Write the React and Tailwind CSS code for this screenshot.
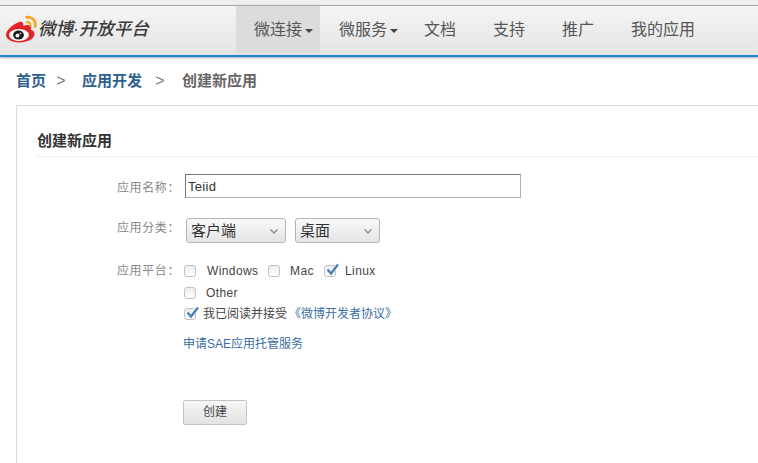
const font = { fontFamily: '"Liberation Sans", "Noto Sans CJK SC", sans-serif' };

function Logo() {
  return (
    <svg width="32" height="28" viewBox="0 0 32 28" className="shrink-0">
      <path d="M13 7C8 9 0 14.500 0 20c0 4.500 6.500 7.500 13.500 7.500C21.500 27.500 28.500 23.500 28.500 19c0-2.600-2-3.800-3.800-4.300 .8-2 .6-3.400-.6-4.200-1.800-1-4.600-.4-6.800 .6 .6-2.400-.6-5.300-4.300-4.100z" fill="#e2232a" />
      <ellipse cx="13" cy="20" rx="10" ry="6" fill="#fff" />
      <ellipse cx="12.500" cy="20" rx="5.400" ry="4.500" fill="#1b1b1b" />
      <circle cx="11.500" cy="20.500" r="2" fill="#fff" />
      <circle cx="14.500" cy="18.500" r="0.800" fill="#fff" />
      <path d="M20.500 2.200c5.200-1 10 3.500 8.600 9.300" fill="none" stroke="#f5a623" strokeWidth="2.800" strokeLinecap="round" />
      <path d="M20.800 7.200c2.300-.5 4.200 1.400 3.700 3.700" fill="none" stroke="#f5a623" strokeWidth="2.200" strokeLinecap="round" />
    </svg>
  );
}

function Caret() {
  return <span className="ml-[3px] mb-[-3px] inline-block border-x-[4px] border-t-[4px] border-x-transparent border-t-[#444]" />;
}

function NavItem({ label, caret, active }) {
  return (
    <a className={`flex items-center h-full pl-[18px] ${active ? 'pr-[7px] mr-px bg-[#dcdcdc]' : caret ? 'pr-[8px]' : 'pr-[19px]'} text-[16px] text-[#555]`}>
      {label}
      {caret && <Caret />}
    </a>
  );
}

function Check({ checked }) {
  return (
    <span className="relative block w-[12px] h-[12px] shrink-0 rounded-[3px] border border-[#c2c2c2] bg-gradient-to-b from-[#ededed] to-white">
      {checked && (
        <svg width="15" height="14" viewBox="0 0 15 14" className="absolute left-0 top-[-4px]">
          <path d="M2.500 7.500L6 11.500 13 2.500" fill="none" stroke="#fff" strokeWidth="3.400" />
          <path d="M2.500 7.500L6 11.500 13 2.500" fill="none" stroke="#4a80b8" strokeWidth="2.400" />
        </svg>
      )}
    </span>
  );
}

function Dropdown({ label, width }) {
  return (
    <div className={`flex items-center justify-between h-[25px] pl-[4px] pr-[7px] pt-[1px] rounded-[3px] border border-[#b5b5b5] bg-gradient-to-b from-[#fafafa] to-[#e4e4e4] text-[15px] text-[#333] ${width}`}>
      {label}
      <svg width="8" height="5" viewBox="0 0 8 5">
        <path d="M.5 .5l3.500 3.500 3.500-3.500" fill="none" stroke="#888" strokeWidth="1.300" />
      </svg>
    </div>
  );
}

function Row({ label, labelPad = '', className, children }) {
  return (
    <div className={`flex ${className}`}>
      <div className={`w-[168px] shrink-0 pr-[5px] text-right text-[12px] leading-[16px] tracking-[0.6px] text-[#888] ${labelPad}`}>{label}</div>
      <div className="flex-1">{children}</div>
    </div>
  );
}

export default function App() {
  return (
    <div style={font} className="w-[758px] h-[463px] overflow-hidden bg-white">
      <div className="h-[5px] bg-[#efefef]" />
      <header className="h-[52px] border-t border-t-[#a9a9a9] border-b-[2px] border-b-[#1f86cf] bg-gradient-to-b from-[#f5f5f5] to-[#e4e4e4] shadow-[0_1px_2px_rgba(0,0,0,0.35)] flex">
        <div className="w-[236px] flex items-center pl-[6px] pb-[3px]">
          <Logo />
          <span className="text-[17.500px] font-medium italic text-[#3a3a3a] whitespace-nowrap">微博·开放平台</span>
        </div>
        <nav className="flex h-[47px]">
          <NavItem label="微连接" caret active />
          <NavItem label="微服务" caret />
          <NavItem label="文档" />
          <NavItem label="支持" />
          <NavItem label="推广" />
          <NavItem label="我的应用" />
        </nav>
      </header>

      <div className="flex items-center h-[20px] mt-[14px] pl-[16px] text-[15px] font-bold whitespace-nowrap">
        <a className="text-[#2f5f8f]">首页</a>
        <span className="ml-[8px] mr-[14px] w-[14px] text-center text-[16px] font-normal text-[#777]">&gt;</span>
        <a className="text-[#2f5f8f]">应用开发</a>
        <span className="ml-[11px] mr-[15px] w-[14px] text-center text-[16px] font-normal text-[#777]">&gt;</span>
        <span className="text-[#666]">创建新应用</span>
      </div>

      <main className="ml-[16px] mt-[14px] h-[400px] border-l border-t border-[#d9d9d9] pl-[20px] pt-[25px]">
        <h2 className="h-[26px] border-b border-[#eeeeee] text-[15px] font-bold leading-[20px] text-[#333]">创建新应用</h2>

        <div className="ml-[-20px] pt-[17px]">
          <Row label="应用名称：" labelPad="pt-[3px]" className="items-center">
            <input
              readOnly
              value="Teiid"
              style={font}
              className="block w-[336px] h-[24px] border border-[#b0b0b0] border-t-[#777] border-l-[#777] pl-[2px] text-[13px] tracking-[0.300px] text-[#333] outline-none"
            />
          </Row>

          <Row label="应用分类：" labelPad="pt-[2px]" className="mt-[20px] items-start">
            <div className="flex gap-[9px] pl-[1px]">
              <Dropdown label="客户端" width="w-[100px]" />
              <Dropdown label="桌面" width="w-[85px]" />
            </div>
          </Row>

          <Row label="应用平台：" className="mt-[20px] items-start">
            <div className="text-[12px] leading-[16px] tracking-[0.400px] text-[#444]">
              <div className="flex items-center h-[16px] ml-[-1px]">
                <Check />
                <span className="ml-[11px] w-[50px]">Windows</span>
                <span className="ml-[11px]"><Check /></span>
                <span className="ml-[10px] w-[34px]">Mac</span>
                <Check checked />
                <span className="ml-[9px]">Linux</span>
              </div>
              <div className="flex items-center h-[16px] mt-[6px] ml-[-1px]">
                <Check />
                <span className="ml-[10px]">Other</span>
              </div>
              <div className="flex items-center h-[16px] mt-[5px] ml-[-1px] tracking-normal">
                <Check checked />
                <span className="ml-[7px] text-[#444]">我已阅读并接受</span>
                <a className="ml-[2px] text-[#3a6ea5]">《微博开发者协议》</a>
              </div>
              <a className="block ml-[-2px] mt-[14px] tracking-normal text-[#3a6ea5]">申请SAE应用托管服务</a>
            </div>
          </Row>

          <div className="pl-[166px] mt-[47px]">
            <button style={font} className="w-[64px] h-[25px] rounded-[2px] border border-[#c4c4c4] bg-gradient-to-b from-[#f7f7f7] to-[#e2e2e2] text-[12px] text-[#444]">创建</button>
          </div>
        </div>
      </main>
    </div>
  );
}
